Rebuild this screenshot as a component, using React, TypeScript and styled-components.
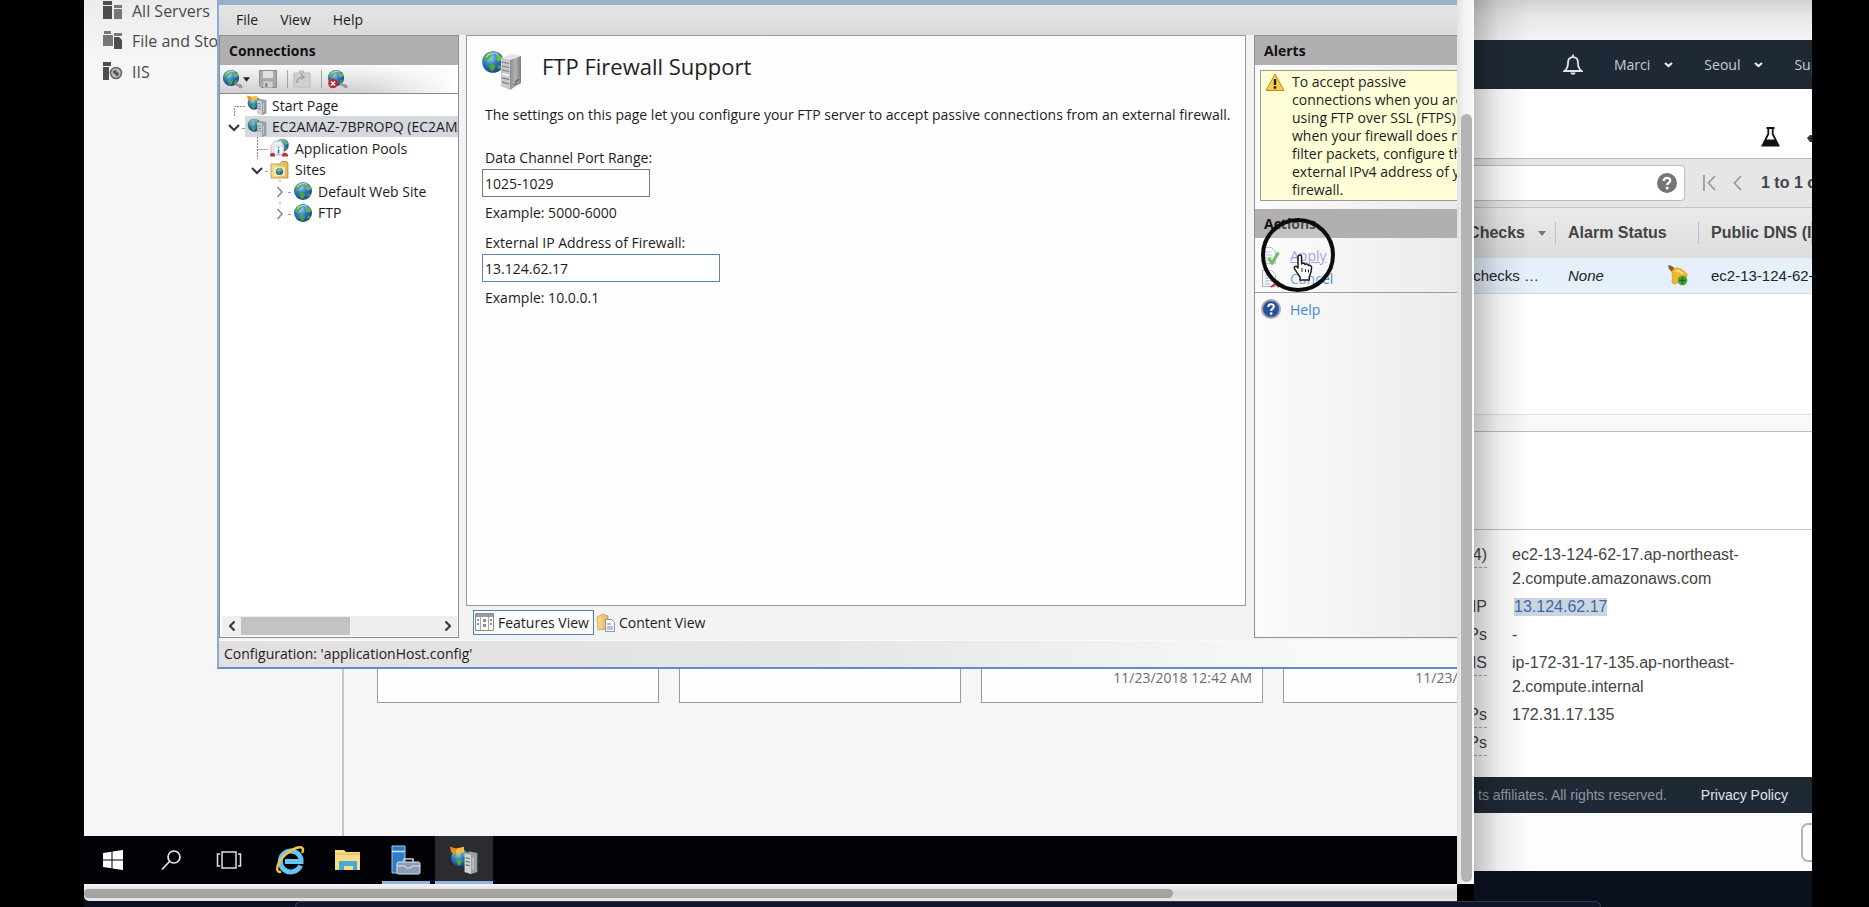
import React from "react";
import styled, { createGlobalStyle, css } from "styled-components";

const segoe = `"Open Sans", "Noto Sans", sans-serif`;
const helvetica = `"Liberation Sans", Arial, sans-serif`;

const GlobalStyle = createGlobalStyle`
  *, *::before, *::after { box-sizing: border-box; }
  body { margin: 0; background: #000; font-family: ${segoe}; font-size: 14px; color: #1c1c1c; }
  button, input { font: inherit; color: inherit; margin: 0; }
  button { border: 0; padding: 0; background: none; cursor: pointer; }
  a { color: inherit; text-decoration: none; }
  svg { display: block; flex: none; }
  h1, h2, p, ul, dl, dd, dt { margin: 0; padding: 0; }
`;

/* ---------- stage ---------- */

const Stage = styled.div`
  display: flex;
  height: 100vh;
  min-height: 880px;
  padding: 0 57px 0 84px;
  background: #000;
`;

const Screen = styled.div`
  flex: 1;
  min-width: 0;
  display: flex;
  flex-direction: column;
  background: #0b101f;
  overflow: hidden;
`;

const Windows = styled.div`
  flex: 1;
  min-height: 0;
  display: flex;
`;

const DockEdge = styled.div`
  height: 6px;
  margin: 0 211px;
  border: 1px solid #33384a;
  border-bottom: 0;
  border-radius: 6px 6px 0 0;
  background: #11162a;
`;

/* ---------- remote desktop window ---------- */

const Remote = styled.section`
  flex: 1;
  min-width: 0;
  display: grid;
  grid-template-columns: minmax(0, 1fr) 17px;
  grid-template-rows: minmax(0, 1fr) 17px;
`;

const Desktop = styled.div`
  display: flex;
  flex-direction: column;
  overflow: hidden;
`;

const VerticalTrack = styled.div`
  padding: 114px 2px 2px 4px;
  display: flex;
  background: linear-gradient(90deg, #e2e2e2, #f2f2f2 40%, #fafafa);
`;

const VerticalThumb = styled.div`
  flex: 1;
  border-radius: 6px;
  background: #b4b4b4;
`;

const HorizontalTrack = styled.div`
  padding: 5px 284px 3px 0;
  display: flex;
  background: linear-gradient(#f6f6f6, #dadada 50%, #e6e6e6);
  border-radius: 0 0 0 5px;
`;

const HorizontalThumb = styled.div`
  flex: 1;
  border-radius: 5px;
  background: #a3a3a2;
`;

const Corner = styled.div`
  background: #000;
`;

const Workspace = styled.div`
  position: relative;
  flex: 1;
  min-height: 0;
  display: flex;
  background: #f6f6f6;
`;

/* ---------- server manager ---------- */

const Sidebar = styled.nav`
  width: 260px;
  flex: none;
  padding: 0 0 0 19px;
  border-right: 2px solid #c6c6c6;
  background: linear-gradient(#ececec, #f6f6f6 60px);
  color: #4a4a4a;
  font-size: 16px;
`;

const SidebarLink = styled.a`
  display: flex;
  align-items: center;
  gap: 9px;
  height: 31px;
  white-space: nowrap;

  &:first-child {
    height: 21px;
    margin-bottom: 4px;
  }
`;

const Tiles = styled.div`
  flex: 1;
  min-width: 0;
  display: flex;
  align-items: flex-end;
  gap: 20px;
  padding: 0 0 133px 33px;
  overflow: hidden;
`;

const Tile = styled.article`
  flex: none;
  width: 282px;
  height: 160px;
  padding: 0 10px 14px;
  display: flex;
  align-items: flex-end;
  justify-content: flex-end;
  border: 1px solid #9b9b9b;
  background: #fdfdfd;
  color: #6d6d6d;
  line-height: 20px;
`;

/* ---------- IIS manager ---------- */

const Manager = styled.section`
  position: absolute;
  top: 0;
  left: 133px;
  right: 0;
  bottom: 167px;
  display: flex;
  flex-direction: column;
  overflow: hidden;
  border: solid #5f8fc9;
  border-width: 0 0 2px 2px;
  border-left-color: #86aedb;
  background: #f3f3f3;
`;

const TitleStrip = styled.div`
  height: 5px;
  flex: none;
  background: #99aec9;
`;

const MenuBar = styled.nav`
  height: 30px;
  flex: none;
  display: flex;
  align-items: center;
  gap: 22px;
  padding: 0 0 2px 17px;
  background: linear-gradient(#e3e5e4, #dadada);
`;

const ManagerBody = styled.div`
  flex: 1;
  min-height: 0;
  display: flex;
  gap: 7px;
  padding-bottom: 2px;
`;

const StatusBar = styled.footer`
  height: 27px;
  flex: none;
  padding-left: 5px;
  border-top: 1px solid #fafafa;
  line-height: 26px;
  background: linear-gradient(90deg, #e2dfe1, #e6e6e6 50%, #fafafa 90%);
`;

const PaneHeading = styled.h2`
  height: 29px;
  flex: none;
  padding-left: 9px;
  font-size: 14px;
  font-weight: 700;
  line-height: 29px;
  color: #111;
  background: #b1afb1;
`;

const Connections = styled.aside`
  width: 240px;
  flex: none;
  display: flex;
  flex-direction: column;
  border: 1px solid #8f8f8f;
  background: #fff;
  overflow: hidden;
`;

const ToolBar = styled.div`
  height: 29px;
  flex: none;
  display: flex;
  align-items: center;
  padding-left: 2px;
  border-bottom: 1px solid #8a8a8a;
  background: linear-gradient(90deg, transparent 60%, #fff), linear-gradient(#fafafa, #cfcfcf);
`;

const ToolButton = styled.button<{ $gap?: number }>`
  height: 22px;
  margin-right: ${(p) => p.$gap ?? 0}px;
  display: flex;
  align-items: center;
`;

const ToolDivider = styled.span`
  width: 1px;
  height: 18px;
  margin-right: 5px;
  background: #a5a5a0;
`;

const Tree = styled.ul`
  flex: 1;
  list-style: none;
`;

const TreeRow = styled.li<{ $level: number }>`
  height: 22px;
  display: flex;
  align-items: center;
  padding-left: ${(p) => 5 + p.$level * 23}px;

  &:nth-child(even) { height: 21px; }
`;

const TreeLabel = styled.a<{ $selected?: boolean }>`
  flex: 1;
  align-self: stretch;
  display: flex;
  align-items: center;
  gap: 5px;
  padding-left: 2px;
  white-space: nowrap;
  background: ${(p) => (p.$selected ? "#d5d8df" : "none")};
`;

const TreeScroll = styled.div`
  height: 20px;
  flex: none;
  margin: 0 1px 1px 2px;
  display: grid;
  grid-template-columns: 19px 109px 1fr 19px;
  place-items: center;
  background: #efefef;
`;

const TreeThumb = styled.div`
  width: 100%;
  height: 18px;
  background: #c3c3c3;
`;

const Center = styled.main`
  flex: 1;
  min-width: 0;
  margin-right: 1px;
  display: flex;
  flex-direction: column;
`;

const Feature = styled.form`
  flex: 1;
  padding: 15px;
  border: 1px solid #999;
  background: #fefefe;
`;

const FeatureHead = styled.header`
  display: flex;
  gap: 20px;
  height: 42px;
`;

const FeatureTitle = styled.h1`
  font-size: 22px;
  font-weight: 400;
  line-height: 30px;
  color: #222;
`;

const Intro = styled.p`
  padding: 12px 0 23px 3px;
  line-height: 20px;
  white-space: nowrap;
`;

const Field = styled.div`
  display: flex;
  flex-direction: column;
  align-items: flex-start;
  padding-bottom: 10px;
`;

const FieldLabel = styled.label`
  padding-left: 3px;
  line-height: 20px;
`;

const FieldHint = styled.p`
  padding: 6px 0 0 3px;
  line-height: 20px;
`;

const TextBox = styled.input<{ $wide?: boolean }>`
  width: ${(p) => (p.$wide ? 238 : 168)}px;
  height: 28px;
  margin-top: 1px;
  padding: 0 2px;
  border: 1px solid ${(p) => (p.$wide ? "#5f81ad" : "#7a7a7a")};
  background: #fff;
  outline: 0;
`;

const ViewTabs = styled.div`
  height: 32px;
  flex: none;
  display: flex;
  align-items: center;
  padding-left: 7px;
`;

const ViewTab = styled.button<{ $active?: boolean }>`
  height: 25px;
  display: flex;
  align-items: center;
  gap: 4px;
  padding: 0 4px 0 1px;
  border: 1px solid ${(p) => (p.$active ? "#4a7fc0" : "transparent")};
  background: ${(p) => (p.$active ? "#fdfdfd" : "none")};
`;

const ActionPane = styled.aside`
  width: 203px;
  flex: none;
  overflow: hidden;
  border: solid #8f8f8f;
  border-width: 1px 0 1px 1px;
  background: linear-gradient(90deg, #fbfbfb, #ebebeb);
`;

const Alert = styled.div`
  width: 230px;
  margin: 5px 0 8px 5px;
  display: flex;
  gap: 7px;
  padding: 2px 0 1px 4px;
  border: 1px solid #9a9a92;
  background: #fffed6;
  line-height: 18px;
  white-space: nowrap;
`;

const ActionList = styled.ul`
  list-style: none;
  padding: 6px 0 0 6px;
`;

const ActionItem = styled.li<{ $divided?: boolean }>`
  position: relative;
  height: 23px;
  display: flex;
  align-items: center;
  gap: 9px;
  color: #3d87d3;
  ${(p) =>
    p.$divided &&
    css`
      height: 33px;
      margin: 2px 0 0 -6px;
      padding-left: 6px;
      border-top: 1px solid #9c9c9c;
    `}
`;

const ActionLink = styled.a<{ $hot?: boolean }>`
  color: ${(p) => (p.$hot ? "#8a7fdb" : "inherit")};
  text-decoration: ${(p) => (p.$hot ? "underline" : "none")};
`;

const Pointer = styled.span`
  position: absolute;
  z-index: 2;
  left: -1px;
  top: -27px;
  pointer-events: none;
`;

/* ---------- task bar ---------- */

const TaskBar = styled.nav`
  height: 48px;
  flex: none;
  display: flex;
  background: #010207;
`;

const TaskButton = styled.button<{ $state?: "running" | "active" }>`
  width: 58px;
  display: grid;
  place-items: center;
  ${(p) =>
    p.$state === "running" &&
    css`
      background: linear-gradient(#8fb4e3, #8fb4e3) center bottom / 48px 3px no-repeat;
    `}
  ${(p) =>
    p.$state === "active" &&
    css`
      background: #2b2c31;
      border-bottom: 3px solid #8fb4e3;
      padding-top: 3px;
    `}
`;

const PinnedApps = styled.div`
  display: flex;
  padding-left: 3px;
`;

/* ---------- cloud console ---------- */

const Console = styled.section`
  position: relative;
  width: 338px;
  flex: none;
  margin-bottom: 30px;
  display: flex;
  flex-direction: column;
  overflow: hidden;
  background: #fff;
  color: #444;
  font-family: ${helvetica};
  font-size: 15px;
`;

const EdgeShade = styled.div`
  position: absolute;
  inset: 0 auto 0 0;
  width: 56px;
  background: linear-gradient(90deg, rgba(0, 0, 0, 0.24), rgba(0, 0, 0, 0.07) 45%, transparent);
  pointer-events: none;
`;

const BrowserTop = styled.div`
  height: 40px;
  flex: none;
  background: linear-gradient(#d0d2d4, #e4e6e8 40%, #f3f4f5);
`;

const NavBar = styled.nav`
  height: 49px;
  flex: none;
  display: flex;
  align-items: center;
  padding-left: 89px;
  background: #1f2936;
  color: #c9cdd2;
  font-family: ${segoe};
  font-size: 14px;
  white-space: nowrap;
`;

const NavMenu = styled.button`
  display: flex;
  align-items: center;
  gap: 14px;
  margin-left: 31px;
`;

const Tools = styled.div`
  height: 69px;
  flex: none;
  display: flex;
  justify-content: flex-end;
  align-items: flex-end;
  gap: 27px;
  padding-bottom: 11px;
`;

const FilterBar = styled.div`
  height: 50px;
  flex: none;
  display: flex;
  align-items: center;
  border-top: 1px solid #b9b9b9;
  border-bottom: 1px solid #c4c4c4;
  background: #e6e6e6;
  font-size: 16px;
  font-weight: 700;
  white-space: nowrap;
`;

const SearchBox = styled.label`
  width: 211px;
  height: 36px;
  flex: none;
  display: flex;
  align-items: center;
  padding-right: 7px;
  border: 1px solid #bdbdbd;
  border-left: 0;
  border-radius: 0 4px 4px 0;
  background: #fff;
`;

const SearchInput = styled.input`
  flex: 1;
  min-width: 0;
  border: 0;
  outline: 0;
  background: none;
`;

const PageButton = styled.button<{ $before: number }>`
  margin-left: ${(p) => p.$before}px;
`;

const PageCount = styled.span`
  margin-left: 19px;
`;

const Instances = styled.table`
  width: 100%;
  flex: none;
  table-layout: fixed;
  border-collapse: collapse;
  white-space: nowrap;
  text-align: left;
`;

const HeadCell = styled.th<{ $width?: number }>`
  width: ${(p) => (p.$width ? p.$width + "px" : "auto")};
  height: 50px;
  padding: 0 0 0 12px;
  background: linear-gradient(#c0c0c0, #c0c0c0) right center / 1px 22px no-repeat, linear-gradient(#ebebeb, #dcdcdc);
  font-size: 16px;
  color: #444;
  overflow: hidden;
`;

const BodyCell = styled.td`
  height: 35px;
  padding: 0 0 0 12px;
  background: #e5f0fb;
  border-bottom: 1px solid #cfdbe6;
  color: #222;
  overflow: hidden;
`;

const CellLine = styled.div<{ $end?: number; $split?: boolean }>`
  display: flex;
  align-items: center;
  gap: 13px;
  justify-content: ${(p) => (p.$split ? "space-between" : p.$end ? "flex-end" : "flex-start")};
  padding-right: ${(p) => p.$end ?? 0}px;
`;

const SplitHandle = styled.div`
  height: 18px;
  flex: none;
  margin-top: 120px;
  border-top: 1px solid #dedede;
  border-bottom: 1px solid #bcbcbc;
  background: #f9f9f9;
`;

const DetailHead = styled.div`
  height: 98px;
  flex: none;
  border-bottom: 1px solid #c2c2c2;
`;

const Details = styled.dl`
  flex: 1;
  display: flex;
  flex-direction: column;
  gap: 4px;
  padding-top: 13px;
  font-size: 16px;
  line-height: 24px;
`;

const DetailRow = styled.div`
  display: flex;
  align-items: flex-start;
  gap: 25px;
`;

const DetailName = styled.dt<{ $dashed?: boolean }>`
  width: 13px;
  height: 25px;
  flex: none;
  margin-bottom: -1px;
  display: flex;
  justify-content: flex-end;
  border-bottom: 1px dashed ${(p) => (p.$dashed ? "#aaa" : "transparent")};
`;

const Selected = styled.a`
  display: inline-block;
  margin-left: 2px;
  line-height: 18px;
  background: #cbd5e0;
  color: #3a6ba8;
`;

const ConsoleFooter = styled.footer`
  height: 36px;
  flex: none;
  display: flex;
  align-items: center;
  gap: 34px;
  padding-left: 4px;
  background: #1f2936;
  color: #8f969e;
  font-size: 14px;
  white-space: nowrap;
`;

const FooterLink = styled.a`
  color: #e1e4e8;
`;

const Downloads = styled.div`
  height: 58px;
  flex: none;
  display: flex;
  justify-content: flex-end;
  align-items: center;
  background: #fdfdfd;
`;

const DownloadButton = styled.button`
  width: 11px;
  height: 39px;
  border: 2px solid #b5b5b5;
  border-right: 0;
  border-radius: 7px 0 0 7px;
`;

/* ---------- drawings ---------- */

const Gradients = () => (
  <svg width="0" height="0" style={{ position: "absolute" }} aria-hidden="true">
    <defs>
      <radialGradient id="sea" cx="0.38" cy="0.3" r="0.75">
        <stop offset="0" stopColor="#9fd4f5" />
        <stop offset="0.45" stopColor="#2f79c6" />
        <stop offset="1" stopColor="#173f86" />
      </radialGradient>
      <linearGradient id="steel" x1="0" x2="1">
        <stop offset="0" stopColor="#8b8f92" />
        <stop offset="0.5" stopColor="#b0b3b6" />
        <stop offset="1" stopColor="#777c80" />
      </linearGradient>
      <linearGradient id="sand" x1="0" x2="1">
        <stop offset="0" stopColor="#f7df92" />
        <stop offset="1" stopColor="#dfb554" />
      </linearGradient>
    </defs>
  </svg>
);

const GlobeShape = () => (
  <>
    <circle cx="10" cy="10" r="9" fill="url(#sea)" />
    <path d="M4 4.500c2-2 4.500-2.600 6-2.300.7 1-.5 1.600-1.500 2.300.2 1.200-.6 2.200-1.900 2.600-.6 1.100-1.800 2.100-3.200 2.300-.9-.9-1.100-3.300.6-4.900z" fill="#58ad3f" />
    <path d="M12.800 3c2.600.8 4.700 2.600 5.300 5.100-.8 1.200-2.100.2-2.600 1.300-1.300.3-2.600-.8-2.400-2.200.2-1.300-1.300-2.600-.3-4.200z" fill="#6bbb46" />
    <path d="M7.500 11.200c1.700-.5 3.600.2 4.400 1.700.5 1.600-.9 2.500-1.500 4-.6.900-1.700 1-2.200.2-.3-1.300-1.800-2.100-1.700-3.700 0-.9.300-1.700 1-2.200z" fill="#4da438" />
    <path d="M14.800 12.800c.9-.4 1.900-.2 2.500.3-.4 1.300-1.300 2.400-2.400 3.100-.7-.9-.9-2.500-.1-3.400z" fill="#4da438" />
    <path d="M4.500 6c1.500-3 6.500-4.300 9.500-2.600" stroke="#fff" strokeOpacity="0.55" strokeWidth="1.200" fill="none" />
  </>
);

const Globe = () => (
  <svg width="20" height="20" viewBox="0 0 20 20"><GlobeShape /></svg>
);

const SiteServer = () => (
  <svg width="40" height="40" viewBox="0 0 40 40">
    <g transform="translate(-1 -1) scale(1.200)"><GlobeShape /></g>
    <path d="M19 7l11-4 9 2-11 4z" fill="#e3e5e6" />
    <path d="M19 7l9 2v30l-9-4z" fill="#c5c9cc" />
    <path d="M28 9l11-4v27l-11 7z" fill="url(#steel)" />
    <path d="M20 11l7 1.500M20 15l7 1.500M20 19l7 1.500M20 27l7 1.500M20 31l7 2" stroke="#777b7f" strokeWidth="1.200" />
    <path d="M20 23l7 1.500" stroke="#eef0f1" strokeWidth="2" />
    <path d="M33 31l4-3M32 34l3-2" stroke="#5e6266" strokeWidth="1.200" />
  </svg>
);

const SmallServer = ({ size = 20, flag }: { size?: number; flag?: boolean }) => (
  <svg width={size} height={size} viewBox="0 0 20 20">
    <g transform="translate(0 1) scale(0.720)"><GlobeShape /></g>
    {flag && (
      <>
        <path d="M0 .5l4.500 1.200L4 6 .8 4.500z" fill="#ef8a22" />
        <path d="M4.500 1.700L10 .5v4L4.200 6z" fill="#f6bf3f" />
      </>
    )}
    <path d="M10.500 5.500L14 4l5.500 1v13.500L15 20l-4.500-1.500z" fill="#9a9fa3" />
    <path d="M10.500 5.500L15 6.500V20l-4.500-1.500z" fill="#cfd3d6" />
    <path d="M11.200 8.500l3 .6M11.200 11l3 .6M11.200 13.500l3 .6" stroke="#73787c" strokeWidth="0.900" />
    <path d="M16.500 8v9" stroke="#c4c7ca" strokeWidth="1" />
  </svg>
);

const ConnectIcon = ({ remove }: { remove?: boolean }) => (
  <svg width="21" height="20" viewBox="0 0 21 20">
    <g transform="scale(0.9)"><GlobeShape /></g>
    <path d="M13 13l3 2.500c2-.5 4 .5 4.500 2.500-1.500 1.200-3.500.9-4.500-.7l-3.500-2.300z" fill="#9a9da0" stroke="#77797b" strokeWidth="0.500" />
    {remove && (
      <>
        <circle cx="6" cy="14.500" r="4.800" fill="#c3272b" />
        <path d="M4 12.500l4 4M8 12.500l-4 4" stroke="#fff" strokeWidth="1.500" />
      </>
    )}
  </svg>
);

const SaveIcon = () => (
  <svg width="20" height="20" viewBox="0 0 20 20">
    <path d="M1.500 1.500h17v17h-15l-2-2z" fill="#a9a9a9" stroke="#8b8b8b" />
    <path d="M5 2h10v7H5z" fill="#e0e0e0" />
    <path d="M5.500 12.500h9v6h-9z" fill="#d2d2d2" />
    <path d="M7 14h2.500v4H7z" fill="#8b8b8b" />
  </svg>
);

const ClipIcon = () => (
  <svg width="18" height="20" viewBox="0 0 18 20">
    <path d="M1 4h16v14H1z" fill="#cfcfcf" stroke="#b9b9b9" />
    <path d="M6 1.500h5v3H6z" fill="#bbb" />
    <path d="M4 14c0-4 2-6 6-6M8 5.500l3 2.500-3 2.500" stroke="#a0a0a0" strokeWidth="1.600" fill="none" />
  </svg>
);

const PoolsIcon = () => (
  <svg width="20" height="20" viewBox="0 0 20 20">
    <g transform="translate(5 0) scale(0.72)"><GlobeShape /></g>
    <path d="M1 8l4-5h6l3 5v9H1z" fill="#eceef0" stroke="#a9aeb3" strokeWidth="0.800" />
    <path d="M4 8h9v8H4z" fill="#fff" stroke="#b9c4d0" strokeWidth="0.800" />
    <path d="M8.500 9v1.200M8.500 11.500v4" stroke="#2f6fc0" strokeWidth="1.600" />
    <path d="M0 17c1-3 4-3 5 0v1.500H0zM12 17c1-3 5-3 6 0v1.500h-6z" fill="#b5372f" />
  </svg>
);

const SitesIcon = () => (
  <svg width="20" height="20" viewBox="0 0 20 20">
    <path d="M1 4h9l1.500-2.500H17L18 4v14H1z" fill="url(#sand)" stroke="#b58d3e" strokeWidth="0.800" />
    <path d="M4 7h11v9H4z" fill="#f7e7b2" />
    <g transform="translate(5.500 7.500) scale(0.400)"><GlobeShape /></g>
  </svg>
);

const Twist = ({ kind }: { kind: "first" | "branch" | "open" | "closed" }) => (
  <svg width="20" height="22" viewBox="0 0 20 22" fill="none">
    {kind === "first" && <path d="M20 12.500H9.500V22" stroke="#8c8c8c" strokeDasharray="2 1" />}
    {kind === "branch" && <path d="M9.500 0v22M9.500 12.500H20" stroke="#8c8c8c" strokeDasharray="2 1" />}
    {kind === "open" && (
      <>
        <path d="M4 9l5 5 5-5" stroke="#333" strokeWidth="2" />
        <path d="M17 12.500h3" stroke="#999" />
      </>
    )}
    {kind === "closed" && (
      <>
        <path d="M6.500 7l4.500 5-4.500 5" stroke="#8a8a8a" strokeWidth="1.600" />
        <path d="M17 12.500h3" stroke="#999" />
        <path d="M9 0v2" stroke="#999" />
      </>
    )}
  </svg>
);

const Caret = ({ color = "#222", size = 8 }: { color?: string; size?: number }) => (
  <svg width={size} height="5" viewBox="0 0 8 5"><path d="M0 0h8L4 5z" fill={color} /></svg>
);

const SmallChevron = () => (
  <svg width="9" height="6" viewBox="0 0 9 6"><path d="M1 1l3.500 3L8 1" stroke="#eee" strokeWidth="2.200" fill="none" /></svg>
);

const ScrollArrow = ({ flip }: { flip?: boolean }) => (
  <svg width="8" height="12" viewBox="0 0 8 12">
    <path d={flip ? "M1.500 1.500L6 6l-4.500 4.500" : "M6.500 1.500L2 6l4.500 4.500"} stroke="#333" strokeWidth="2" fill="none" />
  </svg>
);

const ServersIcon = () => (
  <svg width="20" height="19" viewBox="0 0 20 19" fill="#4d4d4d">
    <path d="M0 0h9v4H0zM0 5h9v13H0z" />
    <path d="M11 4h8v3h-8zM11 8h8v10h-8z" fill="#777" />
  </svg>
);

const StorageIcon = () => (
  <svg width="20" height="19" viewBox="0 0 20 19" fill="#777">
    <path d="M1 0h7v3H1zM0 4h10v11H0zM11 2h8v3h-8z" />
    <path d="M11 6h5l3 3v9h-8z" fill="#4d4d4d" />
  </svg>
);

const IisIcon = () => (
  <svg width="20" height="19" viewBox="0 0 20 19">
    <path d="M0 0h8v4H0zM0 5h6v13H0z" fill="#4d4d4d" />
    <circle cx="13" cy="11" r="5.500" fill="#bbb" stroke="#666" strokeWidth="1.600" />
    <path d="M10 9l3-1 1 2 2 1-1 3-2 0-1-2-2-1z" fill="#555" />
  </svg>
);

const FeaturesIcon = () => (
  <svg width="19" height="18" viewBox="0 0 19 18">
    <path d="M0.500 0.500h18v17h-18z" fill="#fff" stroke="#8c8c8c" />
    <path d="M1 1h17v3H1z" fill="#9a9a9a" />
    <path d="M5.500 4v13M13.500 4v13" stroke="#aaa" />
    <path d="M2 6h2v2H2zM2 10h2v2H2zM15 6h2v2h-2zM15 10h2v2h-2zM8 6h3v3H8zM8 11h3v3H8z" fill="#8f8f8f" />
  </svg>
);

const ContentIcon = () => (
  <svg width="19" height="19" viewBox="0 0 19 19">
    <path d="M1 4l6-3 5 2v13l-10 1z" fill="url(#sand)" stroke="#b58d3e" strokeWidth="0.600" />
    <path d="M9.500 6.500h6l3 3v9h-9z" fill="#fff" stroke="#8e9299" />
    <path d="M11 11h4M11 14h6M11 16h6" stroke="#5c7fd0" strokeWidth="1.200" />
  </svg>
);

const WarningIcon = () => (
  <svg width="20" height="19" viewBox="0 0 20 19">
    <path d="M10 1l9 16.500H1z" fill="#f6cf4a" stroke="#b98b1b" strokeLinejoin="round" />
    <path d="M10 6v6" stroke="#222" strokeWidth="2.400" />
    <circle cx="10" cy="14.500" r="1.400" fill="#222" />
  </svg>
);

const PageSheet = () => (
  <path d="M1.500 1.500h9l4 4v12h-13zM4 6h6M4 9h7M4 12h7M4 15h5" fill="#f4f6fb" stroke="#a9afc0" />
);

const ApplyIcon = () => (
  <svg width="20" height="20" viewBox="0 0 20 20">
    <PageSheet />
    <path d="M7.500 12l3.500 5 6.500-10.500" stroke="#49a430" strokeWidth="3" fill="none" />
  </svg>
);

const CancelIcon = () => (
  <svg width="20" height="20" viewBox="0 0 20 20">
    <PageSheet />
    <path d="M10 18l8-6M13 12l5 6" stroke="#cc3333" strokeWidth="2" fill="none" />
  </svg>
);

const HelpIcon = () => (
  <svg width="20" height="20" viewBox="0 0 20 20">
    <circle cx="10" cy="10" r="9" fill="#27519f" stroke="#a5a9ad" strokeWidth="2" />
    <path d="M7.200 8c0-3.800 5.800-3.600 5.600-.3-.1 1.900-2.600 2-2.600 4.300" stroke="#fff" strokeWidth="2" fill="none" />
    <circle cx="10.200" cy="14.600" r="1.300" fill="#fff" />
  </svg>
);

const ClickRing = () => (
  <svg width="76" height="76" viewBox="0 0 76 76">
    <circle cx="38" cy="38" r="35" fill="#fff" fillOpacity="0.250" stroke="#0c0c0c" strokeWidth="4" />
    <path
      d="M38 40c0-2.600 3.600-2.600 3.600 0v7c.6-1.300 3.200-1.200 3.500.6.8-1 3-.8 3.400 1 1.200-.7 3.100 0 3.100 1.900 0 4-1 6.500-2.300 9.500V63H40v-3c-1.500-2.500-3.500-5-5.300-7.800-1.300-2.200 1-3.700 2.600-2.200l.7 1z"
      fill="#fff"
      stroke="#1b1b1b"
      strokeWidth="1.500"
      strokeLinejoin="round"
    />
    <path d="M42 51v4M45.500 52v3M48.500 52.500v3" stroke="#1b1b1b" strokeWidth="1" />
  </svg>
);

const StartIcon = () => (
  <svg width="20" height="20" viewBox="0 0 20 20" fill="#fff">
    <path d="M0 3l8.500-1.200v7.700H0zM9.500 1.600L20 0v9.500H9.500zM0 10.500h8.500v7.700L0 17zM9.500 10.500H20V20L9.500 18.400z" />
  </svg>
);

const SearchIcon = () => (
  <svg width="22" height="22" viewBox="0 0 22 22" fill="none" stroke="#e8e8e8" strokeWidth="1.700">
    <circle cx="14" cy="8" r="6" /><path d="M9.500 12.500L2 20.500" />
  </svg>
);

const TaskViewIcon = () => (
  <svg width="26" height="20" viewBox="0 0 26 20" fill="none" stroke="#e0e0e0" strokeWidth="1.500">
    <rect x="6" y="2" width="14" height="16" /><path d="M4 4H1.500v12H4M22 4h2.500v12H22" />
  </svg>
);

const ExplorerIcon = () => (
  <svg width="30" height="30" viewBox="0 0 30 30" fill="none">
    <path d="M25.500 20.500A10.500 10.500 0 1 1 26 14v2.500H10" stroke="#64c6f4" strokeWidth="5" />
    <path d="M6 27C-1 28 2 17 11 9 18 3 27 0 28 4c.3 1.300-.2 2.700-1 4" stroke="#f4c63c" strokeWidth="2.400" />
  </svg>
);

const FolderIcon = () => (
  <svg width="26" height="22" viewBox="0 0 26 22">
    <path d="M0 1h9l2 2h14v18H0z" fill="#f7dc85" />
    <path d="M4 12h18v9h-4v-4H9v4H4z" fill="#4aa7d9" />
    <path d="M0 4h25v2H0z" fill="#ecc866" />
  </svg>
);

const ServerManagerIcon = () => (
  <svg width="30" height="30" viewBox="0 0 30 30">
    <path d="M1 1h13v27H1z" fill="#2f7cc4" stroke="#9cc8ee" />
    <path d="M1 6.500h13" stroke="#cfe4f6" strokeWidth="1.500" />
    <path d="M13 17v-3h9v3" stroke="#c6ccd4" strokeWidth="1.600" fill="none" />
    <rect x="6" y="17" width="23" height="12" rx="1.500" fill="#8a9bb5" stroke="#dfe5ee" />
    <path d="M6 21h8l1 2h5l1-2h8" stroke="#dfe5ee" fill="none" />
  </svg>
);

const BellIcon = () => (
  <svg width="20" height="22" viewBox="0 0 20 22" fill="none" stroke="#e3e6e9" strokeWidth="1.800">
    <path d="M1.500 17h17c-2.500-2-3.500-4-3.500-8 0-3.500-2-5.800-5-5.800S5 5.500 5 9c0 4-1 6-3.500 8z" />
    <path d="M10 3V.5" />
    <path d="M7.500 18.500h5c0 3-5 3-5 0z" fill="#e3e6e9" stroke="none" />
  </svg>
);

const FlaskIcon = () => (
  <svg width="19" height="20" viewBox="0 0 19 20">
    <path d="M5.500 1h8M7.300 1v6L1.500 18.500h16L11.700 7V1" stroke="#111" strokeWidth="1.800" fill="none" />
    <path d="M4.500 12.500h10l3 6h-16z" fill="#111" />
  </svg>
);

const MegaphoneEdge = () => (
  <svg width="5" height="18" viewBox="0 0 5 18"><path d="M0 9l3-3h2v7H3z" fill="#333" /></svg>
);

const SearchHelp = () => (
  <svg width="20" height="20" viewBox="0 0 20 20">
    <circle cx="10" cy="10" r="10" fill="#757575" />
    <path d="M6.800 8c0-4.300 6.600-4 6.400-.3-.1 2-3 2.200-3 4.300" stroke="#fff" strokeWidth="2.400" fill="none" />
    <circle cx="10.200" cy="15" r="1.500" fill="#fff" />
  </svg>
);

const PageArrow = ({ bar }: { bar?: boolean }) => (
  <svg width={bar ? 13 : 9} height="16" viewBox={bar ? "0 0 13 16" : "4 0 9 16"} fill="none" stroke="#9b9b9b" strokeWidth="1.800">
    {bar && <path d="M1 0v16" />}
    <path d="M12 1L5.500 8l6.500 7" />
  </svg>
);

const AlarmBell = () => (
  <svg width="21" height="21" viewBox="0 0 21 21">
    <path d="M1 0l4 1 4 4-3 3-4-4z" fill="#8a5a2b" />
    <path d="M5 6c1-2 3-3 5-3 4 0 7 3 10 6 .5 2-1 4-3 5l-9 5c-2 0-3-1-3-3 1-3 0-6 0-10z" fill="#f3b62b" stroke="#c98a17" strokeWidth="0.600" />
    <path d="M9 6c3-1 5 1 7 3" stroke="#fbe08a" strokeWidth="2" fill="none" />
    <circle cx="15.500" cy="15.500" r="4.800" fill="#49a32e" />
    <path d="M15.500 12.500v6M12.500 15.500h6" stroke="#236b18" strokeWidth="1.400" />
  </svg>
);

/* ---------- data ---------- */

const treeNodes = [
  { label: "Start Page", level: 0, twist: "first", icon: <SmallServer flag /> },
  { label: "EC2AMAZ-7BPROPQ (EC2AMAZ", level: 0, twist: "open", icon: <SmallServer />, selected: true },
  { label: "Application Pools", level: 1, twist: "branch", icon: <PoolsIcon /> },
  { label: "Sites", level: 1, twist: "open", icon: <SitesIcon /> },
  { label: "Default Web Site", level: 2, twist: "closed", icon: <Globe /> },
  { label: "FTP", level: 2, twist: "closed", icon: <Globe /> },
] as const;

const tileTimes = ["", "", "11/23/2018 12:42 AM", "11/23/2018 12:42 AM"];

const details = [
  { name: "4)", dashed: true, value: <>ec2-13-124-62-17.ap-northeast-<br />2.compute.amazonaws.com</> },
  { name: "IP", value: <Selected href="#ip">13.124.62.17</Selected> },
  { name: "Ps", value: "-" },
  { name: "NS", dashed: true, value: <>ip-172-31-17-135.ap-northeast-<br />2.compute.internal</> },
  { name: "Ps", dashed: true, value: "172.31.17.135" },
  { name: "Ps", dashed: true, value: "" },
];

/* ---------- sections ---------- */

const IisManager = () => (
  <Manager>
    <TitleStrip />
    <MenuBar>
      <button type="button">File</button>
      <button type="button">View</button>
      <button type="button">Help</button>
    </MenuBar>
    <ManagerBody>
      <Connections>
        <PaneHeading>Connections</PaneHeading>
        <ToolBar>
          <ToolButton type="button" aria-label="Connect" $gap={8}><ConnectIcon /><Caret size={7} /></ToolButton>
          <ToolButton type="button" aria-label="Save" $gap={9}><SaveIcon /></ToolButton>
          <ToolDivider />
          <ToolButton type="button" aria-label="Up" $gap={10}><ClipIcon /></ToolButton>
          <ToolDivider />
          <ToolButton type="button" aria-label="Disconnect"><ConnectIcon remove /></ToolButton>
        </ToolBar>
        <Tree>
          {treeNodes.map((n) => (
            <TreeRow key={n.label} $level={n.level}>
              <Twist kind={n.twist} />
              <TreeLabel href="#node" $selected={"selected" in n}>{n.icon}{n.label}</TreeLabel>
            </TreeRow>
          ))}
        </Tree>
        <TreeScroll><ScrollArrow /><TreeThumb /><span /><ScrollArrow flip /></TreeScroll>
      </Connections>

      <Center>
        <Feature onSubmit={(e) => e.preventDefault()}>
          <FeatureHead>
            <SiteServer />
            <FeatureTitle>FTP Firewall Support</FeatureTitle>
          </FeatureHead>
          <Intro>The settings on this page let you configure your FTP server to accept passive connections from an external firewall.</Intro>
          <Field>
            <FieldLabel htmlFor="ports">Data Channel Port Range:</FieldLabel>
            <TextBox id="ports" defaultValue="1025-1029" />
            <FieldHint>Example: 5000-6000</FieldHint>
          </Field>
          <Field>
            <FieldLabel htmlFor="address">External IP Address of Firewall:</FieldLabel>
            <TextBox id="address" defaultValue="13.124.62.17" $wide />
            <FieldHint>Example: 10.0.0.1</FieldHint>
          </Field>
        </Feature>
        <ViewTabs>
          <ViewTab type="button" $active><FeaturesIcon />Features View</ViewTab>
          <ViewTab type="button"><ContentIcon />Content View</ViewTab>
        </ViewTabs>
      </Center>

      <ActionPane>
        <PaneHeading>Alerts</PaneHeading>
        <Alert>
          <WarningIcon />
          <p>
            To accept passive<br />connections when you are<br />using FTP over SSL (FTPS)<br />when your firewall does not<br />
            filter packets, configure the<br />external IPv4 address of your<br />firewall.
          </p>
        </Alert>
        <PaneHeading>Actions</PaneHeading>
        <ActionList>
          <ActionItem>
            <ApplyIcon /><ActionLink href="#apply" $hot>Apply</ActionLink>
            <Pointer><ClickRing /></Pointer>
          </ActionItem>
          <ActionItem><CancelIcon /><ActionLink href="#cancel">Cancel</ActionLink></ActionItem>
          <ActionItem $divided><HelpIcon /><ActionLink href="#help">Help</ActionLink></ActionItem>
        </ActionList>
      </ActionPane>
    </ManagerBody>
    <StatusBar>Configuration: 'applicationHost.config'</StatusBar>
  </Manager>
);

const CloudConsole = () => (
  <Console>
    <BrowserTop />
    <NavBar>
      <BellIcon />
      <NavMenu type="button">Marci <SmallChevron /></NavMenu>
      <NavMenu type="button">Seoul <SmallChevron /></NavMenu>
      <NavMenu type="button">Support</NavMenu>
    </NavBar>
    <Tools><FlaskIcon /><MegaphoneEdge /></Tools>
    <FilterBar>
      <SearchBox><SearchInput type="text" aria-label="Filter instances" /><SearchHelp /></SearchBox>
      <PageButton type="button" aria-label="First page" $before={18}><PageArrow bar /></PageButton>
      <PageButton type="button" aria-label="Previous page" $before={17}><PageArrow /></PageButton>
      <PageCount>1 to 1 of 1</PageCount>
    </FilterBar>
    <Instances>
      <thead>
        <tr>
          <HeadCell $width={82}><CellLine $end={10}>Checks <Caret color="#777" /></CellLine></HeadCell>
          <HeadCell $width={143}>Alarm Status</HeadCell>
          <HeadCell>Public DNS (IPv4)</HeadCell>
        </tr>
      </thead>
      <tbody>
        <tr>
          <BodyCell><CellLine $end={17}>checks …</CellLine></BodyCell>
          <BodyCell><CellLine $split $end={11}><em>None</em><AlarmBell /></CellLine></BodyCell>
          <BodyCell>ec2-13-124-62-17.ap-northeast-2.compute.amazonaws.com</BodyCell>
        </tr>
      </tbody>
    </Instances>
    <SplitHandle />
    <DetailHead />
    <Details>
      {details.map((d, i) => (
        <DetailRow key={i}>
          <DetailName $dashed={d.dashed}>{d.name}</DetailName>
          <dd>{d.value}</dd>
        </DetailRow>
      ))}
    </Details>
    <ConsoleFooter>
      <span>ts affiliates. All rights reserved.</span>
      <FooterLink href="#privacy">Privacy Policy</FooterLink>
    </ConsoleFooter>
    <Downloads><DownloadButton type="button" aria-label="Show all" /></Downloads>
    <EdgeShade />
  </Console>
);

export default function App() {
  return (
    <>
      <GlobalStyle />
      <Gradients />
      <Stage>
        <Screen>
          <Windows>
            <Remote>
              <Desktop>
                <Workspace>
                  <Sidebar>
                    <SidebarLink href="#all"><ServersIcon />All Servers</SidebarLink>
                    <SidebarLink href="#storage"><StorageIcon />File and Storage</SidebarLink>
                    <SidebarLink href="#iis"><IisIcon />IIS</SidebarLink>
                  </Sidebar>
                  <Tiles>
                    {tileTimes.map((t, i) => <Tile key={i}>{t}</Tile>)}
                  </Tiles>
                  <IisManager />
                </Workspace>
                <TaskBar>
                  <TaskButton aria-label="Start"><StartIcon /></TaskButton>
                  <TaskButton aria-label="Search"><SearchIcon /></TaskButton>
                  <TaskButton aria-label="Task view"><TaskViewIcon /></TaskButton>
                  <PinnedApps>
                    <TaskButton aria-label="Internet Explorer"><ExplorerIcon /></TaskButton>
                    <TaskButton aria-label="File Explorer"><FolderIcon /></TaskButton>
                    <TaskButton aria-label="Server Manager" $state="running"><ServerManagerIcon /></TaskButton>
                    <TaskButton aria-label="IIS Manager" $state="active"><SmallServer size={28} flag /></TaskButton>
                  </PinnedApps>
                </TaskBar>
              </Desktop>
              <VerticalTrack><VerticalThumb /></VerticalTrack>
              <HorizontalTrack><HorizontalThumb /></HorizontalTrack>
              <Corner />
            </Remote>
            <CloudConsole />
          </Windows>
          <DockEdge />
        </Screen>
      </Stage>
    </>
  );
}
